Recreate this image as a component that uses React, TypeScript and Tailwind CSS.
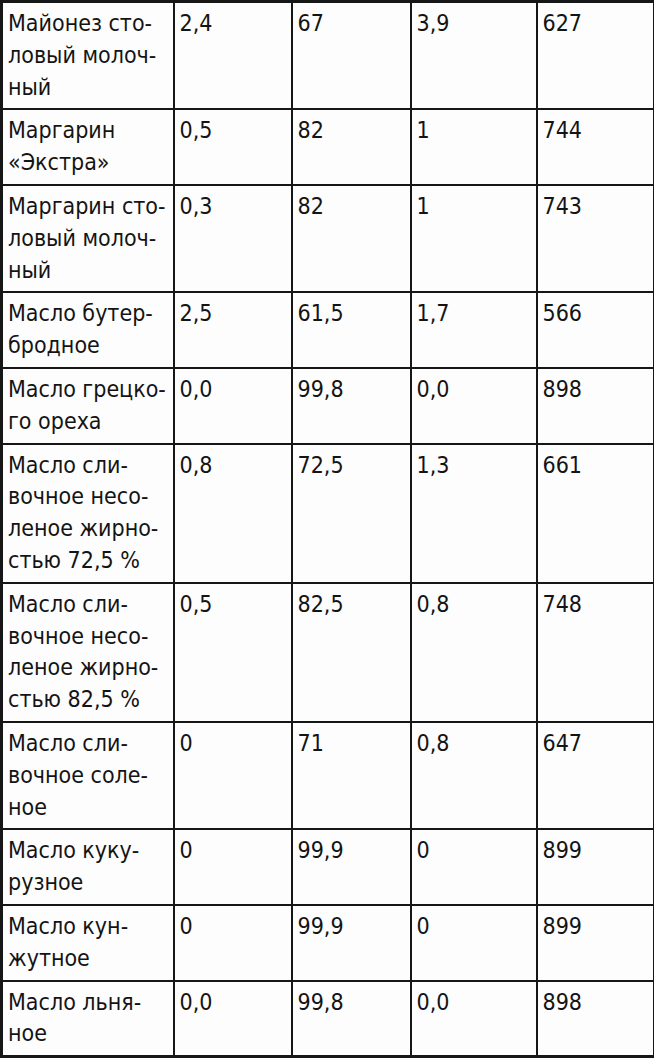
import React from "react";

type Row = { name: string[]; v: string[] };

const rows: Row[] = [
  { name: ["Майонез сто-", "ловый молоч-", "ный"], v: ["2,4", "67", "3,9", "627"] },
  { name: ["Маргарин", "«Экстра»"], v: ["0,5", "82", "1", "744"] },
  { name: ["Маргарин сто-", "ловый молоч-", "ный"], v: ["0,3", "82", "1", "743"] },
  { name: ["Масло бутер-", "бродное"], v: ["2,5", "61,5", "1,7", "566"] },
  { name: ["Масло грецко-", "го ореха"], v: ["0,0", "99,8", "0,0", "898"] },
  { name: ["Масло сли-", "вочное несо-", "леное жирно-", "стью 72,5 %"], v: ["0,8", "72,5", "1,3", "661"] },
  { name: ["Масло сли-", "вочное несо-", "леное жирно-", "стью 82,5 %"], v: ["0,5", "82,5", "0,8", "748"] },
  { name: ["Масло сли-", "вочное соле-", "ное"], v: ["0", "71", "0,8", "647"] },
  { name: ["Масло куку-", "рузное"], v: ["0", "99,9", "0", "899"] },
  { name: ["Масло кун-", "жутное"], v: ["0", "99,9", "0", "899"] },
  { name: ["Масло льня-", "ное"], v: ["0,0", "99,8", "0,0", "898"] },
];

export default function App() {
  return (
    <div className="w-[654px] h-[1060px] bg-[#fdfdfd] overflow-hidden">
      <table
        className="w-[653px] border-collapse border-[3px] border-[#161616] text-[#141414] text-[23px] leading-[31.8px] table-fixed"
        style={{ fontFamily: '"DejaVu Sans Condensed", "DejaVu Sans", sans-serif' }}
      >
        <colgroup>
          <col className="w-[172px]" />
          <col className="w-[118px]" />
          <col className="w-[119px]" />
          <col className="w-[126px]" />
          <col className="w-[118px]" />
        </colgroup>
        <tbody>
          {rows.map((r, i) => (
            <tr key={i}>
              <td className="border-2 border-[#161616] align-top pl-[5px] pr-0 pt-[5px] pb-[5px] whitespace-nowrap">
                {r.name.map((l, j) => (
                  <div key={j}>{l}</div>
                ))}
              </td>
              {r.v.map((v, j) => (
                <td key={j} className="border-2 border-[#161616] align-top pl-[5px] pt-[5px] pb-[5px] whitespace-nowrap">
                  {v}
                </td>
              ))}
            </tr>
          ))}
        </tbody>
      </table>
    </div>
  );
}
